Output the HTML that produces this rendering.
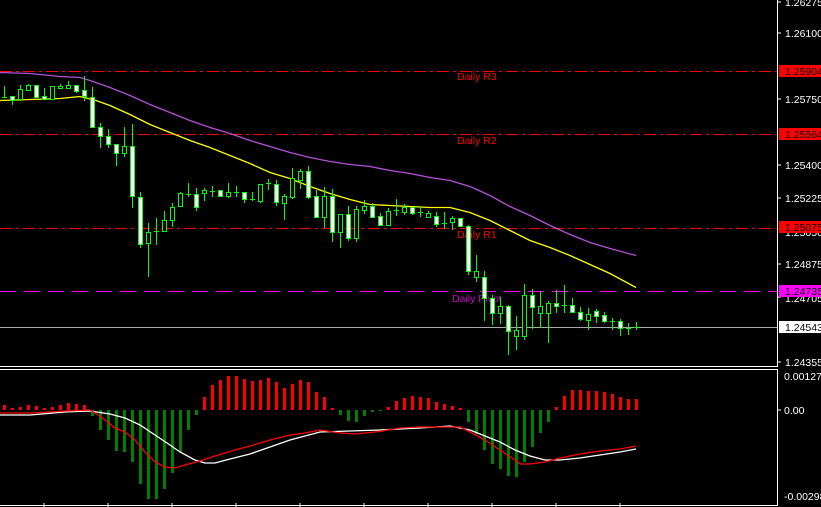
<!DOCTYPE html>
<html><head><meta charset="utf-8"><style>
html,body{margin:0;padding:0;background:#000;width:821px;height:507px;overflow:hidden}
svg{display:block}
text{font-family:"Liberation Sans",sans-serif;font-size:10.5px}
</style></head><body>
<svg id="s" width="821" height="507" xmlns="http://www.w3.org/2000/svg">
<rect width="821" height="507" fill="#000"/>
<line x1="0" y1="71.5" x2="777" y2="71.5" stroke="#f00" stroke-dasharray="12,4,3,4"/>
<line x1="0" y1="134.5" x2="777" y2="134.5" stroke="#f00" stroke-dasharray="12,4,3,4"/>
<line x1="0" y1="228.5" x2="777" y2="228.5" stroke="#f00" stroke-dasharray="12,4,3,4"/>
<line x1="0" y1="291.5" x2="777" y2="291.5" stroke="#f0f" stroke-dasharray="16,8"/>
<line x1="0" y1="327.5" x2="777" y2="327.5" stroke="#aaa"/>
<text x="457" y="80" fill="#f00">Daily R3</text>
<text x="457" y="144" fill="#f00">Daily R2</text>
<text x="457" y="238" fill="#f00">Daily R1</text>
<text x="452" y="302" fill="#c0c">Daily Pivot</text>
<polyline fill="none" stroke="#b44fd8" stroke-width="1.3" points="0,72.5 30,73.5 60,76.5 80,77.5 90,80.5 110,87.5 130,95.5 150,104.5 170,112.5 190,120.5 210,127.5 230,133.5 250,140.5 270,146.5 290,152.5 310,157.5 330,161.5 350,164.5 370,166.5 390,170.5 410,173.5 430,177.5 450,180.5 470,186.5 490,195.5 510,206.5 530,215.5 550,225.5 570,234.5 590,242.5 610,248.5 636,255.5"/>
<polyline fill="none" stroke="#ff0" stroke-width="1.3" points="0,100.5 60,98.5 80,96.5 96,100.5 110,105.5 130,114.5 150,124.5 170,132.5 190,140.5 210,147.5 230,155.5 250,163.5 270,172.5 290,178.5 310,186.5 330,193.5 350,199.5 370,204.5 390,205.5 410,206.5 430,207.5 450,207.5 470,212.5 490,220.5 510,230.5 530,240.5 550,247.5 570,255.5 590,264.5 610,273.5 636,287.5"/>
<g id="cd"></g>
<g id="mh"></g>
<polyline fill="none" stroke="#fff" stroke-width="1.3" points="0,415 30,415 65,412 90,411 110,414 125,418 140,425 155,435 170,445 180,452 195,460 205,463 215,463 230,459 250,454 270,447 290,440 305,436 320,432 350,431 380,430 400,429 420,428 450,426 470,430 485,436 500,442 515,450 530,456 545,460 560,460 580,458 600,455 620,452 636,449"/>
<polyline fill="none" stroke="#f00" stroke-width="1.3" points="0,413 30,413 65,411 90,410 100,416 115,428 125,432 135,440 145,452 155,462 165,467 175,468 185,465 200,461 215,456 235,450 250,446 270,440 290,435 305,433 320,430 340,433 355,434 375,432 400,428 420,427 460,427 470,432 485,440 500,450 515,460 520,464 530,464 545,462 560,458 580,454 600,451 620,449 636,446"/>
<line x1="777.5" y1="0" x2="777.5" y2="366" stroke="#fff"/>
<line x1="0" y1="366.5" x2="778" y2="366.5" stroke="#fff"/>
<line x1="0" y1="369.5" x2="778" y2="369.5" stroke="#fff"/>
<line x1="777.5" y1="369" x2="777.5" y2="505" stroke="#fff"/>
<line x1="0" y1="505.5" x2="778" y2="505.5" stroke="#fff"/>
<g stroke="#fff">
<line x1="44" y1="503" x2="44" y2="507"/><line x1="108" y1="503" x2="108" y2="507"/><line x1="172" y1="503" x2="172" y2="507"/><line x1="236" y1="503" x2="236" y2="507"/><line x1="300" y1="503" x2="300" y2="507"/><line x1="364" y1="503" x2="364" y2="507"/><line x1="428" y1="503" x2="428" y2="507"/><line x1="492" y1="503" x2="492" y2="507"/><line x1="556" y1="503" x2="556" y2="507"/><line x1="620" y1="503" x2="620" y2="507"/>
<line x1="778" y1="2" x2="781" y2="2"/><line x1="778" y1="33" x2="781" y2="33"/><line x1="778" y1="99" x2="781" y2="99"/><line x1="778" y1="165" x2="781" y2="165"/><line x1="778" y1="198" x2="781" y2="198"/><line x1="778" y1="264" x2="781" y2="264"/><line x1="778" y1="297" x2="781" y2="297"/><line x1="778" y1="362" x2="781" y2="362"/><line x1="778" y1="410" x2="781" y2="410"/>
</g>
<g fill="#fff">
<text x="785" y="6">1.26275</text>
<text x="785" y="37">1.26100</text>
<text x="785" y="103">1.25750</text>
<text x="785" y="169">1.25400</text>
<text x="785" y="202">1.25225</text>
<text x="785" y="236">1.25050</text>
<text x="785" y="268">1.24875</text>
<text x="785" y="302">1.24705</text>
<text x="785" y="366">1.24355</text>
<text x="784" y="380">0.001273</text>
<text x="784" y="414">0.00</text>
<text x="784" y="500">-0.00298</text>
</g>
<rect x="779" y="65" width="42" height="12" fill="#f00"/><text x="785" y="75" fill="#000">1.25904</text>
<rect x="779" y="128" width="42" height="12" fill="#f00"/><text x="785" y="138" fill="#000">1.25564</text>
<rect x="779" y="221" width="42" height="12" fill="#f00"/><text x="785" y="231" fill="#000">1.25075</text>
<rect x="779" y="285" width="42" height="12" fill="#f0f"/><text x="785" y="295" fill="#000">1.24735</text>
<rect x="779" y="321" width="42" height="12" fill="#fff"/><text x="785" y="331" fill="#000">1.24543</text>
</svg>
<script>
var C=[[86,98,97,97,'d'],[96,105,96,100,'w'],[85,101,89,99,'h'],[84,90,85,90,'h'],[85,97,85,97,'w'],[88,99,96,99,'w'],[86,99,86,99,'h'],[84,88,86,88,'h'],[81,88,85,88,'h'],[85,93,85,91,'w'],[76,101,90,96,'w'],[87,127,97,127,'w'],[123,148,127,136,'w'],[129,148,136,144,'w'],[144,166,144,153,'w'],[127,157,146,153,'h'],[124,208,146,196,'w'],[192,248,197,244,'w'],[223,277,232,243,'h'],[218,245,231,232,'d'],[211,231,220,231,'h'],[203,227,207,220,'h'],[192,206,193,206,'h'],[183,197,194,194,'d'],[188,211,194,207,'w'],[188,201,190,193,'h'],[186,197,191,191,'d'],[190,196,190,196,'w'],[183,198,192,196,'h'],[186,197,192,192,'d'],[192,203,192,199,'w'],[192,201,199,199,'d'],[184,203,184,201,'h'],[179,190,183,183,'d'],[180,206,184,202,'w'],[194,220,196,203,'h'],[168,199,178,197,'h'],[169,189,171,180,'h'],[166,199,171,197,'w'],[190,217,196,217,'w'],[187,228,196,217,'h'],[189,242,196,232,'w'],[214,248,214,232,'h'],[206,241,214,238,'w'],[206,242,209,238,'h'],[200,214,206,210,'h'],[203,217,206,217,'w'],[213,226,216,225,'w'],[208,225,211,225,'h'],[199,216,210,210,'d'],[204,215,207,212,'h'],[207,215,207,213,'w'],[207,217,212,212,'d'],[211,218,213,217,'h'],[212,227,216,224,'w'],[212,229,223,223,'d'],[216,230,218,222,'h'],[218,226,218,226,'w'],[225,275,226,271,'w'],[255,282,271,277,'h'],[271,321,277,298,'w'],[295,325,298,313,'w'],[297,324,306,313,'h'],[305,355,306,331,'w'],[316,350,330,336,'h'],[284,340,295,336,'h'],[289,329,295,307,'w'],[291,328,306,313,'h'],[301,343,303,313,'h'],[290,313,303,306,'w'],[285,313,305,305,'d'],[298,313,305,312,'w'],[307,321,312,319,'w'],[308,330,314,320,'h'],[309,323,311,316,'w'],[312,323,315,321,'w'],[318,330,321,321,'d'],[319,336,321,328,'w'],[323,335,328,328,'d'],[322,330,327,327,'d']];
var s='';
C.forEach(function(c,i){var x=4+8*i;
s+='<line x1="'+(x+.5)+'" y1="'+c[0]+'" x2="'+(x+.5)+'" y2="'+c[1]+'" stroke="#0f0"/>';
if(c[4]=='d'){s+='<line x1="'+(x-2)+'" y1="'+(c[2]+.5)+'" x2="'+(x+3)+'" y2="'+(c[2]+.5)+'" stroke="#0f0"/>';}
else{var h=Math.max(2,c[3]-c[2]);s+='<rect x="'+(x-2+.5)+'" y="'+(c[2]+.5)+'" width="4" height="'+h+'" fill="'+(c[4]=='w'?'#fff':'#000')+'" stroke="#0f0"/>';}
});
document.getElementById('cd').innerHTML=s;
var H=[405,408,407,405,406,408,407,405,403,404,405,416,430,440,451,452,462,484,499,499,489,473,452,430,415,397,385,380,376,376,379,381,380,378,382,388,384,380,382,392,397,408,415,421,422,416,412,411,407,401,398,396,397,398,402,404,406,408,422,434,450,464,469,476,477,462,447,433,422,407,396,390,390,391,391,392,394,397,399,399];
var m='';
H.forEach(function(v,i){var x=3+8*i;if(v<410)m+='<rect x="'+x+'" y="'+v+'" width="3" height="'+(410-v)+'" fill="#f00"/>';else m+='<rect x="'+x+'" y="410" width="3" height="'+(v-410)+'" fill="#008000"/>';});
document.getElementById('mh').innerHTML=m;
</script>
</body></html>
